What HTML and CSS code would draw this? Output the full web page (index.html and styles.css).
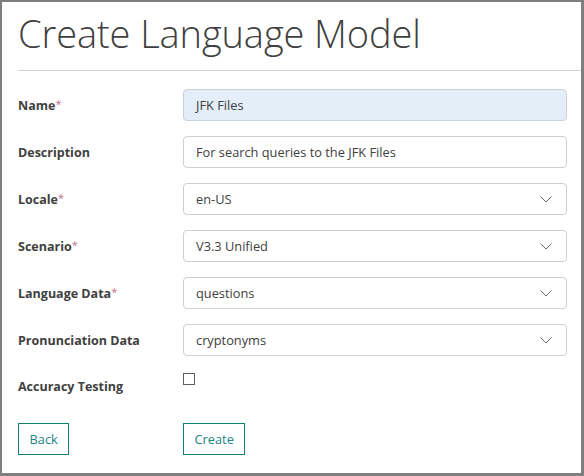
FILE: index.html
```html
<!DOCTYPE html>
<html lang="en">
<head>
<meta charset="utf-8">
<title>Create Language Model</title>
<link rel="stylesheet" href="styles.css">
</head>
<body>
<div class="frame">
  <header class="page-header">
    <h1 class="title">Create Language Model</h1>
  </header>
  <form class="form">
    <div class="row">
      <label class="label">Name<span class="req">*</span></label>
      <div class="control input filled">JFK Files</div>
    </div>
    <div class="row">
      <label class="label">Description</label>
      <div class="control input">For search queries to the JFK Files</div>
    </div>
    <div class="row">
      <label class="label">Locale<span class="req">*</span></label>
      <div class="control select"><span>en-US</span><svg class="chev" width="12" height="7" viewBox="0 0 12 7"><path d="M0.5 0.5 L6 6 L11.5 0.5" fill="none" stroke="#6b6b6b" stroke-width="1"/></svg></div>
    </div>
    <div class="row">
      <label class="label">Scenario<span class="req">*</span></label>
      <div class="control select"><span>V3.3 Unified</span><svg class="chev" width="12" height="7" viewBox="0 0 12 7"><path d="M0.5 0.5 L6 6 L11.5 0.5" fill="none" stroke="#6b6b6b" stroke-width="1"/></svg></div>
    </div>
    <div class="row">
      <label class="label">Language Data<span class="req">*</span></label>
      <div class="control select"><span>questions</span><svg class="chev" width="12" height="7" viewBox="0 0 12 7"><path d="M0.5 0.5 L6 6 L11.5 0.5" fill="none" stroke="#6b6b6b" stroke-width="1"/></svg></div>
    </div>
    <div class="row">
      <label class="label">Pronunciation Data</label>
      <div class="control select"><span>cryptonyms</span><svg class="chev" width="12" height="7" viewBox="0 0 12 7"><path d="M0.5 0.5 L6 6 L11.5 0.5" fill="none" stroke="#6b6b6b" stroke-width="1"/></svg></div>
    </div>
    <div class="row row-check">
      <label class="label">Accuracy Testing</label>
      <div class="check-cell"><span class="checkbox"></span></div>
    </div>
    <div class="row row-buttons">
      <div class="label-cell"><button type="button" class="btn">Back</button></div>
      <div><button type="button" class="btn">Create</button></div>
    </div>
  </form>
</div>
</body>
</html>
```

FILE: styles.css
```css
* { box-sizing: border-box; }
html, body { margin: 0; padding: 0; background: #fff; }
body { font-family: "Open Sans", "Noto Sans", sans-serif; color: #333; }

.frame {
  width: 584px;
  height: 476px;
  border-style: solid;
  border-color: #7f7f7f;
  border-width: 2px 3px 3px 2px;
  padding: 0 0 0 16px;
  background: #fff;
}

.page-header {
  border-bottom: 1px solid #d3d3d3;
  height: 69px;
  padding-top: 8px;
}
.title {
  margin: 0;
  font-weight: 300;
  font-size: 38px;
  line-height: 46px;
  color: #404040;
  letter-spacing: -0.1px;
}

.form {
  padding-top: 18px;
}
.row {
  display: grid;
  grid-template-columns: 165px 384px;
  align-items: center;
  height: 32px;
  margin-bottom: 15px;
}
.label {
  font-weight: 700;
  font-size: 12.5px;
  color: #404040;
}
.req {
  color: #c07088;
  font-weight: 400;
  font-size: 11px;
  vertical-align: 2px;
}

.control {
  height: 32px;
  border: 1px solid #cfcfcf;
  border-radius: 4px;
  font-size: 12.8px;
  color: #404040;
  display: flex;
  align-items: center;
  padding: 0 12px;
}
.filled { background: #e3eef9; border-color: #c7d3df; }
.select { justify-content: space-between; padding-right: 14px; }
.chev { display: block; }

.row-check { align-items: start; height: 32px; margin-bottom: 21px; }
.row-check .label { line-height: 32px; }
.check-cell { padding-top: 2px; }
.checkbox {
  display: block;
  width: 12px;
  height: 12px;
  border: 1px solid #5f5f5f;
}

.row-buttons { margin-top: -1px; }
.btn {
  font-family: inherit;
  font-size: 12.8px;
  color: #1a8585;
  background: #fff;
  border: 1px solid #12806a;
  height: 32px;
  padding: 0 10.5px;
  border-radius: 0;
}
```
